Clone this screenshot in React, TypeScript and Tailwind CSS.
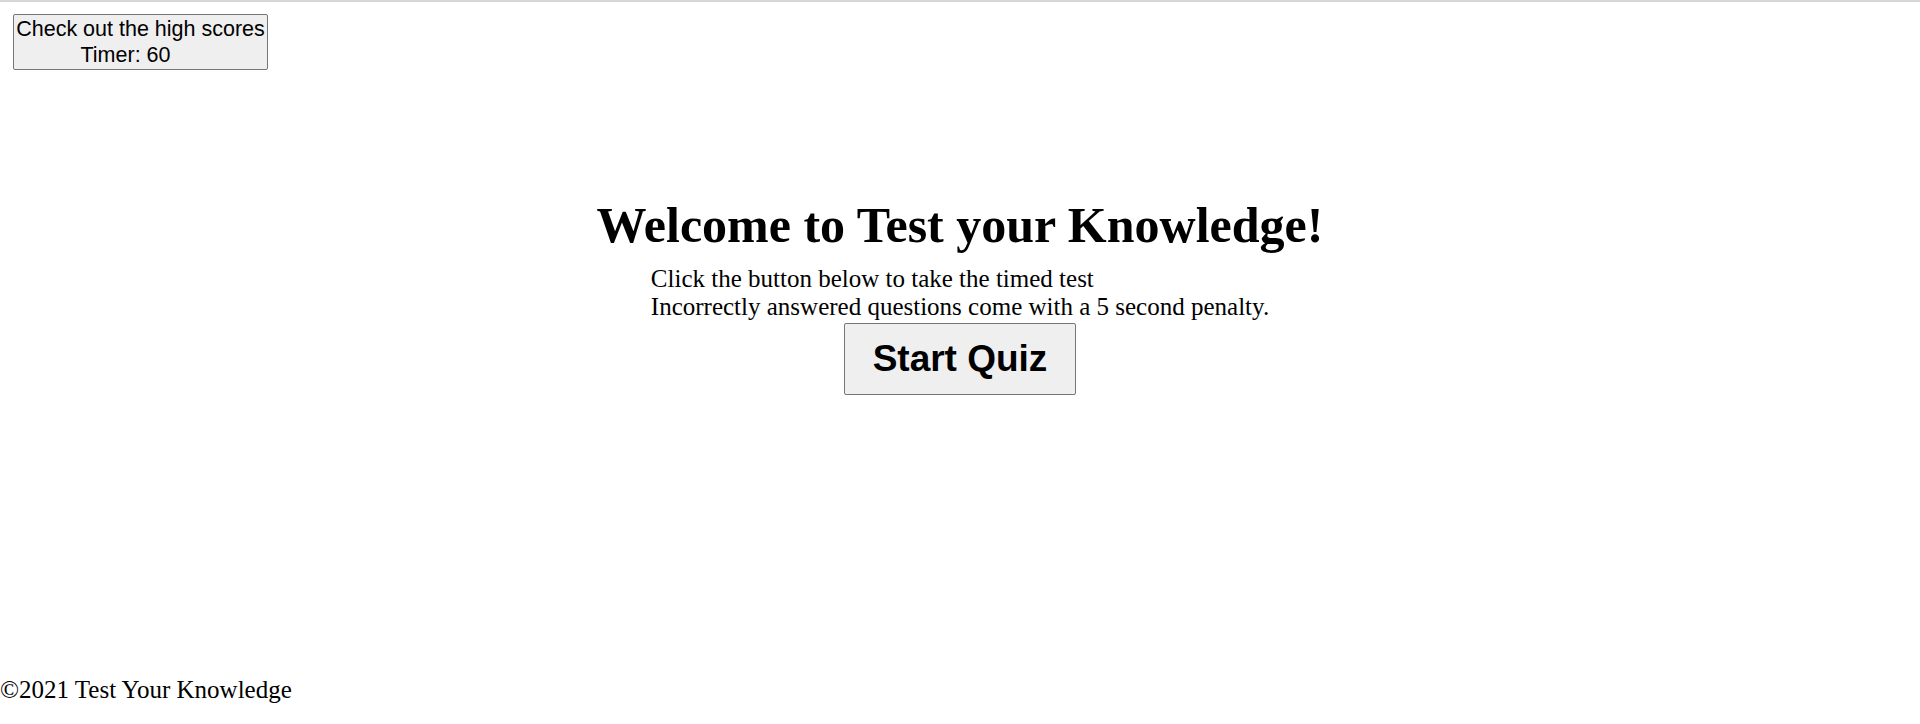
export default function App() {
  return (
    <div className="min-h-[724px] flex flex-col bg-white text-black border-t-2 border-[#d6d6d6] font-['Liberation_Serif','Times_New_Roman',serif]">
      {/* header */}
      <header className="pt-[12px] pl-[13px]">
        <button className="w-[255px] h-[56px] py-[1px] px-[1px] bg-[#efefef] border border-[#767676] rounded-[2px] text-[21.5px] leading-[26px] font-['Liberation_Sans',Arial,sans-serif] text-center">
          <span className="block whitespace-nowrap">Check out the high scores</span>
          <span className="block">
            <span className="mr-[30px]">Timer: 60</span>
          </span>
        </button>
      </header>

      {/* main */}
      <main className="mt-[128px] flex flex-col items-center">
        <h1 className="text-[50px] leading-[55px] font-bold">Welcome to Test your Knowledge!</h1>
        <div className="mt-[12px] text-[25px] leading-[28px] text-left">
          <p>Click the button below to take the timed test</p>
          <p>Incorrectly answered questions come with a 5 second penalty.</p>
        </div>
        <button className="mt-[2px] px-[28px] py-[14px] bg-[#efefef] border border-[#767676] rounded-[2px] text-[37px] leading-[42px] font-bold font-['Liberation_Sans',Arial,sans-serif]">
          Start Quiz
        </button>
      </main>

      {/* footer */}
      <footer className="mt-auto mb-[20px] text-[25px] leading-[28px]">©2021 Test Your Knowledge</footer>
    </div>
  );
}
